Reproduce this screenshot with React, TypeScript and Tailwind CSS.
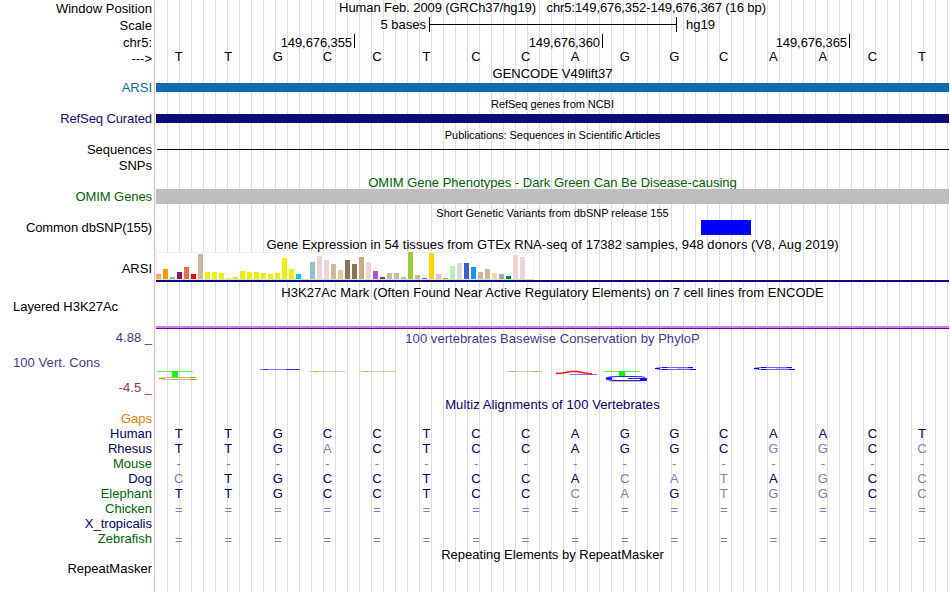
import React from "react";

const INK = {
  black: "text-black",
  navy: "text-[#000064]",
  green: "text-[#006400]",
};

function Label({ className = "", children }: { className?: string; children: React.ReactNode }) {
  return <div className={`h-[15px] shrink-0 whitespace-pre pr-[2px] text-right ${className}`}>{children}</div>;
}

function Title({ className = "", children }: { className?: string; children: React.ReactNode }) {
  return <div className={`h-[15px] shrink-0 whitespace-pre text-center ${className}`}>{children}</div>;
}

function SmallTitle({ className = "", children }: { className?: string; children: React.ReactNode }) {
  return (
    <div className={`h-[13px] shrink-0 whitespace-pre text-center text-[11px] leading-[13px] ${className}`}>
      {children}
    </div>
  );
}

/* One letter per base; lowercase letters and gap symbols are drawn faded. */
function Bases({ seq, className = "" }: { seq: string; className?: string }) {
  return (
    <div className={`-ml-[2px] grid h-[15px] shrink-0 grid-cols-[repeat(16,49.56px)] text-center ${className}`}>
      {seq.split("").map((c, i) => (
        <span key={i} className={/[a-z=-]/.test(c) ? "text-[#8080b4]" : ""}>
          {c.toUpperCase()}
        </span>
      ))}
    </div>
  );
}

const TISSUES: [number, string][] = [
  [5, "#ffaa56"], [10, "#ee9a00"], [2, "#8fbc8f"], [7, "#8b1c62"], [12, "#ee6a50"], [5, "#ff0000"],
  [25, "#cdb79e"], [7, "#eeee00"], [7, "#eeee00"], [6, "#eeee00"], [1, "#eeee00"], [2, "#eeee00"],
  [8, "#eeee00"], [7, "#eeee00"], [7, "#eeee00"], [6, "#eeee00"], [5, "#eeee00"], [6, "#eeee00"],
  [21, "#eeee00"], [10, "#eeee00"], [5, "#00cdcd"], [0, "#ee82ee"], [17, "#9ac0cd"], [23, "#eed5d2"],
  [19, "#eed5d2"], [15, "#cdb79e"], [9, "#eec591"], [19, "#8b7355"], [15, "#8b7355"], [22, "#cdaa7d"],
  [17, "#eed5d2"], [8, "#b452cd"], [2, "#7a378b"], [6, "#cdb79e"], [6, "#cdb79e"], [2, "#cdb79e"],
  [27, "#9acd32"], [4, "#cdb79e"], [1, "#7a67ee"], [26, "#ffd700"], [5, "#ffb6c1"], [1, "#cd9b1d"],
  [13, "#b4eeb4"], [16, "#d9d9d9"], [16, "#3a5fcd"], [12, "#1e90ff"], [7, "#cdb79e"], [10, "#cdb79e"],
  [6, "#ffd39b"], [5, "#a6a6a6"], [3, "#008b45"], [24, "#eed5d2"], [22, "#eed5d2"], [0, "#ff00ff"],
];

function Conservation() {
  return (
    <svg className="block shrink-0" width="793" height="51" viewBox="156 346 793 51" fill="none">
      <path d="M157 371.5H193M604 371.5H640" stroke="#55ff55" />
      <path d="M172 371h6v6h-6zM619 371h6v5h-6z" fill="#00ff00" />
      <path d="M196 377.5H167Q160 378 159.5 378.5Q160 379 167 379.5H197" stroke="#c0c070" />
      <path d="M159 378.5H165M190 377.5H195M190 379.5H195" stroke="#a0a000" />
      <path d="M260 369.5H300" stroke="#7777ee" />
      <path d="M264 369.5H268M286 369.5H299" stroke="#3333cc" />
      <path d="M309 371.5H345M359 371.5H396M507 371.5H543" stroke="#d0d0a0" />
      <path d="M313 371.5H318M363 371.5H368M511 371.5H515M532 371.5H538" stroke="#b4b460" />
      <path d="M570 374.5H597" stroke="#7777ff" />
      <path d="M556 373.5L563 373L571 371.5H577L585 373L592 374" stroke="#ff1010" strokeWidth="1.6" />
      <path d="M610 381.5H640" stroke="#c0c070" />
      <path
        d="M645 377.5Q642 376.5 634 376.5H618Q607 376.5 606.5 378.5Q607 380.5 618 380.5H646V378.5H628"
        stroke="#2222ff"
        strokeWidth="1.2"
      />
      <path d="M606 378.5H612M640 379.5H647" stroke="#0000ff" strokeWidth="2" />
      {[655, 754].map((x) => (
        <g key={x} transform={`translate(${x} 0)`}>
          <path d="M38 367.5H11Q1 367.5 1 368.5Q1 369.5 11 369.5H41" stroke="#6666ff" />
          <path d="M0 368.5H5M7 367.5H12M7 369.5H12M33 367.5H38M35 369.5H41" stroke="#0000ff" />
          <path d="M22 368.5H38" stroke="#ccccff" />
        </g>
      ))}
    </svg>
  );
}

export default function App() {
  return (
    <div className="flex h-[592px] w-[950px] overflow-hidden bg-white font-['Liberation_Sans',Arial,sans-serif] text-[13px] leading-[15px] text-black">
      <div className="flex w-[154px] shrink-0 flex-col">
        <Label className="mt-px">Window Position</Label>
        <Label className="mt-[2px]">Scale</Label>
        <Label className="mt-[2px]">chr5:</Label>
        <Label className="mt-px">---&gt;</Label>
        <Label className="mt-[14px] text-[#0c6cac]">ARSI</Label>
        <Label className="mt-4 tracking-[-0.1px] text-[#0c0c78]">RefSeq Curated</Label>
        <Label className="mt-4">Sequences</Label>
        <Label className="mt-px">SNPs</Label>
        <Label className="mt-4 tracking-[-0.08px] text-[#006400]">OMIM Genes</Label>
        <Label className="mt-4 tracking-[-0.11px]">Common dbSNP(155)</Label>
        <Label className="mt-[26px]">ARSI</Label>
        <div className="mt-[23px] h-[15px] shrink-0 pl-[13px] tracking-[-0.03px]">Layered H3K27Ac</div>
        <Label className="mt-4 text-[#3c3c8c]">4.88 _</Label>
        <div className="mt-[10px] h-[15px] shrink-0 pl-[13px] tracking-[0.07px] text-[#3c3c8c]">100 Vert. Cons</div>
        <Label className="mt-[10px] text-[#8c3c3c]">-4.5 _</Label>
        <Label className="mt-4 text-[#e68200]">Gaps</Label>
        <Label className={INK.navy}>Human</Label>
        <Label className={INK.navy}>Rhesus</Label>
        <Label className={INK.green}>Mouse</Label>
        <Label className={INK.navy}>Dog</Label>
        <Label className={INK.green}>Elephant</Label>
        <Label className={INK.green}>Chicken</Label>
        <Label className={INK.navy}>X_tropicalis</Label>
        <Label className={INK.green}>Zebrafish</Label>
        <Label className="mt-[15px]">RepeatMasker</Label>
      </div>

      <div className="w-px shrink-0 bg-[#ffb4b4]" />

      <div className="flex w-[795px] shrink-0 flex-col border-l border-white bg-[linear-gradient(90deg,transparent_11px,#dcdcf8_11px)] bg-[length:12px_100%] pr-px">
        <Title className="tracking-[-0.09px]">
          Human Feb. 2009 (GRCh37/hg19)   chr5:149,676,352-149,676,367 (16 bp)
        </Title>

        <div className="-ml-px mt-[2px] flex h-[15px] shrink-0">
          <div className="w-[274px] pr-[3px] text-right">5 bases</div>
          <div className="w-[248px] border-x border-black">
            <div className="mt-[7px] h-px bg-black" />
          </div>
          <div className="ml-[9px]">hg19</div>
        </div>

        <div className="-ml-px mt-[2px] flex h-[15px] shrink-0 text-right tracking-[-0.09px]">
          <div className="h-[14px] w-[200px] border-r border-black pr-[2px] pt-px">149,676,355</div>
          <div className="h-[14px] w-[248px] border-r border-black pr-[2px] pt-px">149,676,360</div>
          <div className="h-[14px] w-[247px] border-r border-black pr-[2px] pt-px">149,676,365</div>
        </div>
        <Bases seq="TTGCCTCCAGGCAACT" />

        <Title className="mt-[2px]">GENCODE V49lift37</Title>
        <div className="mt-[2px] h-[9px] shrink-0 bg-[#0c6cac]" />
        <SmallTitle className="mt-[6px] tracking-[-0.06px]">RefSeq genes from NCBI</SmallTitle>
        <div className="mt-[3px] h-[9px] shrink-0 bg-[#0c0c78]" />
        <SmallTitle className="mt-[6px] tracking-[-0.05px]">Publications: Sequences in Scientific Articles</SmallTitle>
        <div className="ml-px mt-[7px] h-px shrink-0 bg-black" />

        <Title className="mt-[25px] text-[#006400]">OMIM Gene Phenotypes - Dark Green Can Be Disease-causing</Title>
        <div className="-mt-px h-[15px] shrink-0 bg-[#bebebe]" />
        <SmallTitle className="mt-[3px] tracking-[-0.02px]">Short Genetic Variants from dbSNP release 155</SmallTitle>
        <div className="ml-[545px] h-[15px] w-[50px] shrink-0 bg-[#0000ff]" />

        <Title className="mt-[2px] tracking-[0.055px]">
          Gene Expression in 54 tissues from GTEx RNA-seq of 17382 samples, 948 donors (V8, Aug 2019)
        </Title>
        <div className="flex h-7 w-[378px] shrink-0 items-end gap-[2px] border border-[#f0f0f0] border-b-[#dcdcdc] bg-white">
          {TISSUES.map(([h, c], i) => (
            <div key={i} className="-ml-px mr-px w-[5px] shrink-0" style={{ height: h, background: c }} />
          ))}
        </div>
        <div className="h-[2px] shrink-0 bg-[#0c0c78]" />

        <Title className="mt-[3px] tracking-[0.058px]">
          H3K27Ac Mark (Often Found Near Active Regulatory Elements) on 7 cell lines from ENCODE
        </Title>
        <div className="mt-[26px] h-[3px] shrink-0 border-b border-[#5a1478] bg-[#d27af8]" />

        <Title className="mt-[2px] tracking-[0.05px] text-[#3c3c8c]">
          100 vertebrates Basewise Conservation by PhyloP
        </Title>
        <Conservation />

        <Title className={`tracking-[0.1px] ${INK.navy}`}>Multiz Alignments of 100 Vertebrates</Title>
        <div className={`mt-[14px] flex shrink-0 flex-col ${INK.navy}`}>
          <Bases seq="TTGCCTCCAGGCAACT" />
          <Bases seq="TTGaCTCCAGGCggCc" />
          <Bases seq="----------------" />
          <Bases seq="cTGCCTCCAcatAgCc" />
          <Bases seq="TTGCCTCCcaGtggCc" />
          <Bases seq="================" className="pt-px" />
          <div className="h-[15px]" />
          <Bases seq="================" className="pt-px" />
        </div>
        <Title className="mt-px">Repeating Elements by RepeatMasker</Title>
      </div>
    </div>
  );
}
